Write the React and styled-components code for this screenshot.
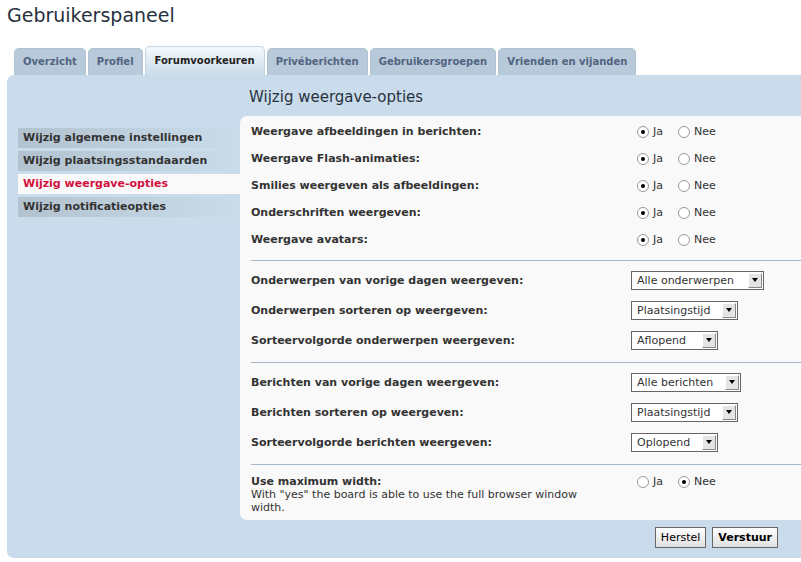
import React from "react";
import styled, { createGlobalStyle } from "styled-components";

const G = createGlobalStyle`
  body { margin: 0; background: #fff; font-family: "DejaVu Sans", Verdana, sans-serif; color: #333; }
`;
const Page = styled.div`padding: 0 0 0 7px; width: 801px; box-sizing: border-box; overflow: hidden;`;
const Title = styled.h2`margin: 0; padding: 3px 0 0 0; font-weight: normal; font-size: 19px; color: #28313f; height: 43px; line-height: 24px;`;
const Tabs = styled.div`display: flex; gap: 2px; padding-left: 7px; align-items: flex-end; height: 29px;`;
const Tab = styled.div`
  padding: 0 ${p => p.$on ? 9 : 8}px; height: ${p => p.$on ? 28 : 26}px; line-height: ${p => p.$on ? 28 : 26}px;
  font-size: 10px; font-weight: bold; border-radius: 5px 5px 0 0;
  color: ${p => p.$on ? "#222" : "#536482"};
  background: ${p => p.$on ? "linear-gradient(#f5f9fc,#cadceb)" : "#b8cad9"};
  border: 1px solid ${p => p.$on ? "#c5d5e2" : "#b0c2d2"}; border-bottom: none;
`;
const Panel = styled.div`background: #cadceb; border-radius: 7px 0 0 7px; display: flex; padding: 0 0 9px 11px; height: 483px; box-sizing: border-box;`;
const Nav = styled.div`width: 222px; padding-top: 53px; display: flex; flex-direction: column; gap: 3px;`;
const NavItem = styled.div`
  height: 20px; line-height: 20px; padding-left: 5px; font-size: 11px; font-weight: bold;
  color: ${p => p.$on ? "#d31141" : "#333"};
  background: ${p => p.$on ? "#f9f9f9" : "linear-gradient(90deg,#b2c2cf,#cadceb)"};
`;
const Main = styled.div`flex: 1; display: flex; flex-direction: column;`;
const H = styled.h3`margin: 0; font-weight: normal; font-size: 15px; color: #28313f; padding: 13px 0 0 9px; height: 28px;`;
const Box = styled.div`background: #f9f9f9; border-radius: 7px 0 0 7px; padding: 2px 0 5px 11px; height: 404px; box-sizing: border-box;`;
const Section = styled.div`border-top: ${p => p.$first ? "none" : "1px solid #a6b6c6"}; padding: ${p => p.$pt}px 0 ${p => p.$pb}px;`;
const Row = styled.div`display: flex; align-items: ${p => p.$top ? "flex-start" : "center"}; min-height: ${p => p.$h || 27}px; font-size: 11px;`;
const Label = styled.div`width: 380px; font-weight: bold; color: #333;`;
const Sub = styled.div`font-weight: normal; font-size: 11px; width: 340px;`;
const Radios = styled.div`display: flex; align-items: center; margin-left: 6px; gap: 5px;`;
const Radio = styled.span`
  width: 10px; height: 10px; border-radius: 50%; border: 1px solid #999; background: #fff; display: inline-flex; align-items: center; justify-content: center; margin-right: 4px;
  &::after { content: ""; width: 4px; height: 4px; border-radius: 50%; background: ${p => p.$on ? "#000" : "transparent"}; }
`;
const Opt = styled.span`display: inline-flex; align-items: center; margin-right: 10px; font-size: 11px;`;
const Select = styled.div`
  height: 19px; border: 1px solid #666; background: #fff; display: flex; align-items: center; font-size: 11px; padding-left: 5px; width: ${p => p.$w}px; box-sizing: border-box; justify-content: space-between;
`;
const Arrow = styled.span`width: 14px; height: 15px; margin-right: 1px; background: #e4e4e4; border: 1px solid #fff; border-right-color:#888; border-bottom-color:#888; box-sizing: border-box; display: flex; align-items: center; justify-content: center;
  &::after { content: ""; border: 3px solid transparent; border-top: 4px solid #000; margin-top: 3px; }`;
const Buttons = styled.div`display: flex; justify-content: flex-end; gap: 6px; padding: 7px 23px 0 0;`;
const Btn = styled.button`height: 21px; font-family: inherit; font-size: 11px; font-weight: ${p => p.$b ? "bold" : "normal"}; border: 1px solid #666; background: linear-gradient(#fff,#e0e0e0); padding: 0 5px; color:#000;`;

const yn = (ja) => (
  <Radios><Opt><Radio $on={ja} />Ja</Opt><Opt><Radio $on={!ja} />Nee</Opt></Radios>
);

export default function App() {
  const s1 = ["Weergave afbeeldingen in berichten:", "Weergave Flash-animaties:", "Smilies weergeven als afbeeldingen:", "Onderschriften weergeven:", "Weergave avatars:"];
  const sel = (a) => a.map(([l, v, w]) => (
    <Row key={l} $h={30}><Label>{l}</Label><Select $w={w}>{v}<Arrow /></Select></Row>
  ));
  return (
    <Page>
      <G />
      <Title>Gebruikerspaneel</Title>
      <Tabs>
        <Tab>Overzicht</Tab><Tab>Profiel</Tab><Tab $on>Forumvoorkeuren</Tab>
        <Tab>Privéberichten</Tab><Tab>Gebruikersgroepen</Tab><Tab>Vrienden en vijanden</Tab>
      </Tabs>
      <Panel>
        <Nav>
          <NavItem>Wijzig algemene instellingen</NavItem>
          <NavItem>Wijzig plaatsingsstandaarden</NavItem>
          <NavItem $on>Wijzig weergave-opties</NavItem>
          <NavItem>Wijzig notificatieopties</NavItem>
        </Nav>
        <Main>
          <H>Wijzig weergave-opties</H>
          <Box>
            <Section $first $pt={0} $pb={7}>{s1.map(l => <Row key={l}><Label>{l}</Label>{yn(true)}</Row>)}</Section>
            <Section $pt={4} $pb={7}>{sel([["Onderwerpen van vorige dagen weergeven:", "Alle onderwerpen", 133], ["Onderwerpen sorteren op weergeven:", "Plaatsingstijd", 107], ["Sorteervolgorde onderwerpen weergeven:", "Aflopend", 87]])}</Section>
            <Section $pt={4} $pb={7}>{sel([["Berichten van vorige dagen weergeven:", "Alle berichten", 110], ["Berichten sorteren op weergeven:", "Plaatsingstijd", 107], ["Sorteervolgorde berichten weergeven:", "Oplopend", 87]])}</Section>
            <Section $pt={10} $pb={0}>
              <Row $top $h={10}><Label>Use maximum width:<Sub>With "yes" the board is able to use the full browser window width.</Sub></Label>{yn(false)}</Row>
            </Section>
          </Box>
          <Buttons><Btn>Herstel</Btn><Btn $b>Verstuur</Btn></Buttons>
        </Main>
      </Panel>
    </Page>
  );
}
